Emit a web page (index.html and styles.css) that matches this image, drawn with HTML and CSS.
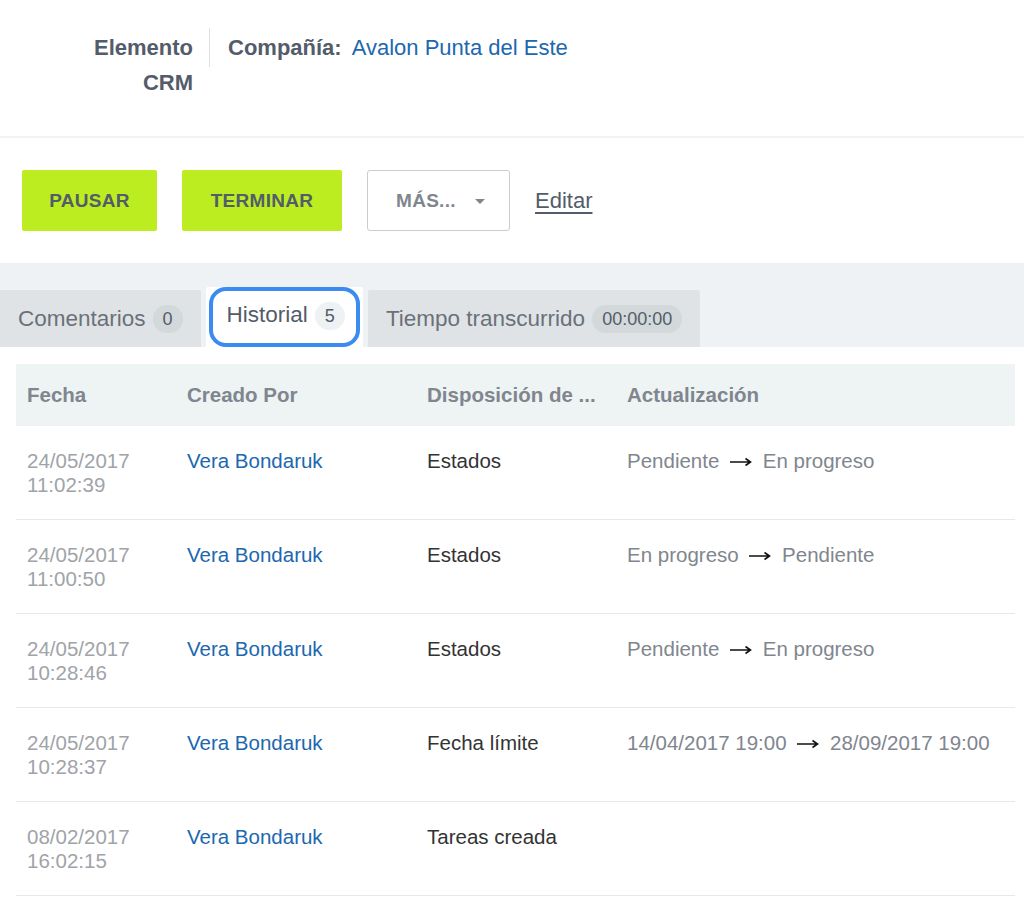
FILE: index.html
```html
<!DOCTYPE html>
<html lang="es">
<head>
    <meta charset="UTF-8">
    <title>Tarea - Historial</title>
    <link rel="stylesheet" href="styles.css">
</head>
<body>
    <div id="entity-head">
        <div class="entity-type">Elemento<br>CRM</div>
        <div class="entity-company">
            <span class="company-label">Compañía:</span>
            <a href="#" class="company-link">Avalon Punta del Este</a>
        </div>
    </div>

    <div id="toolbar">
        <button class="btn btn-green btn-pause">Pausar</button>
        <button class="btn btn-green btn-finish">Terminar</button>
        <button class="btn btn-more">Más... <span class="caret"></span></button>
        <a href="#" class="edit-link">Editar</a>
    </div>

    <div id="tabs">
        <div class="tab">Comentarios <span class="badge">0</span></div>
        <div class="tab tab-active">Historial <span class="badge">5</span></div>
        <div class="tab">Tiempo transcurrido <span class="badge">00:00:00</span></div>
    </div>

    <table id="history">
        <thead>
            <tr>
                <th class="col-date">Fecha</th>
                <th class="col-author">Creado Por</th>
                <th class="col-field">Disposición de ...</th>
                <th>Actualización</th>
            </tr>
        </thead>
        <tbody>
            <tr>
                <td class="date">24/05/2017<br>11:02:39</td>
                <td><a href="#" class="user">Vera Bondaruk</a></td>
                <td class="field">Estados</td>
                <td class="change">Pendiente <svg class="arrow" width="22" height="10" viewBox="0 0 22 10"><path d="M0 5h20M15.5 1.5L20.5 5l-5 3.5" fill="none" stroke="#111" stroke-width="1.6"/></svg> En progreso</td>
            </tr>
            <tr>
                <td class="date">24/05/2017<br>11:00:50</td>
                <td><a href="#" class="user">Vera Bondaruk</a></td>
                <td class="field">Estados</td>
                <td class="change">En progreso <svg class="arrow" width="22" height="10" viewBox="0 0 22 10"><path d="M0 5h20M15.5 1.5L20.5 5l-5 3.5" fill="none" stroke="#111" stroke-width="1.6"/></svg> Pendiente</td>
            </tr>
            <tr>
                <td class="date">24/05/2017<br>10:28:46</td>
                <td><a href="#" class="user">Vera Bondaruk</a></td>
                <td class="field">Estados</td>
                <td class="change">Pendiente <svg class="arrow" width="22" height="10" viewBox="0 0 22 10"><path d="M0 5h20M15.5 1.5L20.5 5l-5 3.5" fill="none" stroke="#111" stroke-width="1.6"/></svg> En progreso</td>
            </tr>
            <tr>
                <td class="date">24/05/2017<br>10:28:37</td>
                <td><a href="#" class="user">Vera Bondaruk</a></td>
                <td class="field">Fecha límite</td>
                <td class="change">14/04/2017 19:00 <svg class="arrow" width="22" height="10" viewBox="0 0 22 10"><path d="M0 5h20M15.5 1.5L20.5 5l-5 3.5" fill="none" stroke="#111" stroke-width="1.6"/></svg> 28/09/2017 19:00</td>
            </tr>
            <tr>
                <td class="date">08/02/2017<br>16:02:15</td>
                <td><a href="#" class="user">Vera Bondaruk</a></td>
                <td class="field">Tareas creada</td>
                <td class="change"></td>
            </tr>
        </tbody>
    </table>
</body>
</html>
```

FILE: styles.css
```css
/* General */
body {
    margin: 0;
    background: #fff;
    font-family: "Liberation Sans", Arial, sans-serif;
    color: #535c69;
}

a {
    text-decoration: none;
}

/* Entity header */
#entity-head {
    display: flex;
    align-items: flex-start;
    padding: 30px 0 36px;
    border-bottom: 2px solid #f1f4f5;
}

.entity-type {
    width: 193px;
    text-align: right;
    font-size: 22px;
    font-weight: bold;
    line-height: 35px;
}

.entity-company {
    display: flex;
    align-items: center;
    height: 39px;
    margin-top: -2px;
    margin-left: 16px;
    padding-left: 18px;
    border-left: 1px solid #dde0e3;
    font-size: 22px;
}

.company-label {
    font-weight: bold;
    margin-right: 10px;
}

.company-link {
    color: #2067b0;
}

/* Toolbar */
#toolbar {
    display: flex;
    align-items: center;
    gap: 25px;
    padding: 32px 22px 32px;
}

.btn {
    height: 61px;
    border: none;
    border-radius: 2px;
    font-family: "Liberation Sans", Arial, sans-serif;
    font-size: 19px;
    font-weight: bold;
    letter-spacing: 0.3px;
    text-transform: uppercase;
    color: #535c69;
    cursor: pointer;
}

.btn-green {
    background: #bbed21;
}

.btn-pause {
    width: 135px;
}

.btn-finish {
    width: 160px;
}

.btn-more {
    width: 143px;
    background: #fff;
    border: 1px solid #c6cdd3;
    border-radius: 3px;
    color: #80868e;
    text-align: left;
    padding-left: 28px;
}

.caret {
    display: inline-block;
    width: 0;
    height: 0;
    margin-left: 14px;
    vertical-align: middle;
    border-left: 5px solid transparent;
    border-right: 5px solid transparent;
    border-top: 5px solid #80868e;
}

.edit-link {
    font-size: 22px;
    color: #535c69;
    text-decoration: underline;
    text-underline-offset: 4px;
}

/* Tabs */
#tabs {
    display: flex;
    align-items: flex-end;
    gap: 5px;
    height: 84px;
    background: #eef2f4;
}

.tab {
    position: relative;
    display: flex;
    align-items: center;
    gap: 7px;
    height: 57px;
    padding: 0 18px;
    background: #dfe3e6;
    border-radius: 2px 2px 0 0;
    font-size: 22.5px;
    color: #6b7179;
}

.tab:first-child {
    border-radius: 0 2px 0 0;
}

.tab-active {
    height: 60px;
    padding: 15px 18px 0 21px;
    background: #fff;
    align-items: flex-start;
    box-sizing: border-box;
    color: #535c69;
}

/* focus ring around the active tab */
.tab-active::after {
    content: "";
    position: absolute;
    top: 0;
    left: 3px;
    right: 3px;
    bottom: 0;
    border: 4px solid #3b8bf0;
    border-radius: 17px;
}

.badge {
    display: inline-block;
    height: 28px;
    line-height: 28px;
    padding: 0 10px;
    border-radius: 14px;
    background: #d3d8db;
    font-size: 18px;
    color: #535c69;
}

.tab-active .badge {
    background: #eef2f4;
}

/* History table */
#history {
    width: 999px;
    margin: 17px 0 0 16px;
    border-collapse: collapse;
    font-size: 20.5px;
}

#history th {
    height: 62px;
    padding: 0 11px;
    background: #eef3f4;
    text-align: left;
    font-weight: bold;
    color: #80868e;
}

.col-date {
    width: 138px;
}

.col-author {
    width: 218px;
}

.col-field {
    width: 178px;
}

#history td {
    padding: 23px 11px 22px;
    line-height: 24px;
    vertical-align: top;
    border-bottom: 1px solid #e6e9eb;
}

.date {
    color: #a0a4a9;
}

.user {
    color: #2067b0;
}

.field {
    color: #333;
}

.change {
    color: #80868e;
}

.arrow {
    margin: 0 5px;
    vertical-align: 1px;
}
```
